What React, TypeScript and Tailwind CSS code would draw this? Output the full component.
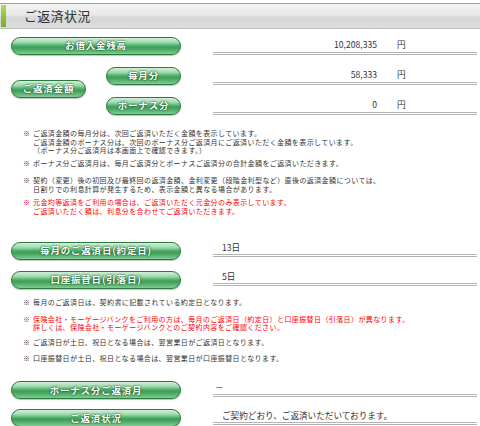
import type { ReactNode } from 'react'

const jp = "font-['Noto_Sans_CJK_JP',sans-serif]"

function Pill({ label, w }: { label: string; w: string }) {
  return (
    <div
      className={`${w} h-[18px] shrink-0 rounded-full border border-[#2b7a3e] bg-[linear-gradient(180deg,#d3f0da_0%,#9bdaab_28%,#48aa62_50%,#3f9e59_62%,#80cd93_100%)] shadow-[0_1px_1px_rgba(0,0,0,0.25)] flex items-center justify-center text-white font-bold text-[9.5px] tracking-[0.8px] leading-none [text-shadow:0_0_2px_#0d4a1c,0_0_1px_#0d4a1c] ${jp}`}
    >
      {label}
    </div>
  )
}

function Cell({ children, h, className = '' }: { children: ReactNode; h: string; className?: string }) {
  return (
    <div
      className={`ml-[32px] w-[264px] ${h} border-b-[3px] border-double border-[#b2b2b2] flex items-center text-[8.6px] text-[#333] ${jp} ${className}`}
    >
      {children}
    </div>
  )
}

function Note({ lines, red, className = '' }: { lines: string[]; red?: boolean; className?: string }) {
  return (
    <div
      className={`flex pl-[23px] text-[7px] leading-[8.6px] tracking-[0.4px] ${red ? 'text-[#ff0000]' : 'text-[#333]'} ${jp} ${className}`}
    >
      <span className="w-[10px] shrink-0">※</span>
      <div>
        {lines.map((l) => (
          <div key={l} className="whitespace-nowrap">{l}</div>
        ))}
      </div>
    </div>
  )
}

function Amount({ value }: { value: string }) {
  return (
    <>
      <span className="w-[164px] text-right">{value}</span>
      <span className="ml-[20px]">円</span>
    </>
  )
}

export default function App() {
  return (
    <div className="w-[480px] h-[426px] overflow-hidden bg-white pt-[3px]">
      {/* title bar */}
      <div className="h-[26px] flex items-center border-t border-[#9c9c9c] border-b border-b-[#bdbdbd] bg-[linear-gradient(180deg,#f3f3f3_0%,#e8e8e8_45%,#d7d7d7_55%,#dddddd_100%)]">
        <div className="ml-[1px] w-[5px] h-[22px] bg-[linear-gradient(180deg,#b4d85a_0%,#74ad2a_100%)]" />
        <div className={`ml-[18px] text-[13px] tracking-[0.3px] text-[#333] ${jp}`}>ご返済状況</div>
      </div>

      {/* amounts */}
      <div className="mt-[8px] flex flex-col gap-[12px]">
        <div className="flex items-start pl-[11px]">
          <Pill label="お借入金残高" w="w-[170px]" />
          <Cell h="h-[18px]">
            <Amount value="10,208,335" />
          </Cell>
        </div>
        <div className="flex items-start pl-[11px]">
          <div className="mt-[13px]">
            <Pill label="ご返済金額" w="w-[75px]" />
          </div>
          <div className="ml-[20px] flex flex-col gap-[12px]">
            <div className="flex items-start">
              <Pill label="毎月分" w="w-[75px]" />
              <Cell h="h-[18px]">
                <Amount value="58,333" />
              </Cell>
            </div>
            <div className="flex items-start">
              <Pill label="ボーナス分" w="w-[75px]" />
              <Cell h="h-[18px]">
                <Amount value="0" />
              </Cell>
            </div>
          </div>
        </div>
      </div>

      {/* notes 1 */}
      <div className="mt-[14px]">
        <Note
          lines={[
            'ご返済金額の毎月分は、次回ご返済いただく金額を表示しています。',
            'ご返済金額のボーナス分は、次回のボーナス分ご返済月にご返済いただく金額を表示しています。',
            '（ボーナス分ご返済月は本画面上で確認できます。）',
          ]}
        />
        <Note
          className="mt-[4.7px]"
          lines={['ボーナス分ご返済月は、毎月ご返済分とボーナスご返済分の合計金額をご返済いただきます。']}
        />
        <Note
          className="mt-[8.4px]"
          lines={[
            '契約（変更）後の初回及び最終回の返済金額、金利変更（段階金利型など）直後の返済金額については、',
            '日割りでの利息計算が発生するため、表示金額と異なる場合があります。',
          ]}
        />
        <Note
          red
          className="mt-[4.7px]"
          lines={[
            '元金均等返済をご利用の場合は、ご返済いただく元金分のみ表示しています。',
            'ご返済いただく額は、利息分を合わせてご返済いただきます。',
          ]}
        />
      </div>

      {/* dates */}
      <div className="mt-[26px] flex flex-col gap-[11px]">
        <div className="flex items-start pl-[11px]">
          <Pill label="毎月のご返済日(約定日)" w="w-[170px]" />
          <Cell h="h-[15px]" className="pl-[9px]">13日</Cell>
        </div>
        <div className="flex items-start pl-[11px]">
          <Pill label="口座振替日(引落日)" w="w-[170px]" />
          <Cell h="h-[15px]" className="pl-[9px]">5日</Cell>
        </div>
      </div>

      {/* notes 2 */}
      <div className="mt-[9px]">
        <Note lines={['毎月のご返済日は、契約書に記載されている約定日となります。']} />
        <Note
          red
          className="mt-[8.4px]"
          lines={[
            '保険会社・モーゲージバンクをご利用の方は、毎月のご返済日（約定日）と口座振替日（引落日）が異なります。',
            '詳しくは、保険会社・モーゲージバンクとのご契約内容をご確認ください。',
          ]}
        />
        <Note className="mt-[6.3px]" lines={['ご返済日が土日、祝日となる場合は、翌営業日がご返済日となります。']} />
        <Note className="mt-[7.4px]" lines={['口座振替日が土日、祝日となる場合は、翌営業日が口座振替日となります。']} />
      </div>

      {/* bonus / status */}
      <div className="mt-[18.7px] flex flex-col gap-[10px]">
        <div className="flex items-start pl-[11px]">
          <Pill label="ボーナス分ご返済月" w="w-[170px]" />
          <Cell h="h-[16px]" className="pl-[2px]">－</Cell>
        </div>
        <div className="flex items-start pl-[11px]">
          <Pill label="ご返済状況" w="w-[170px]" />
          <Cell h="h-[16px]" className="pl-[9px]">ご契約どおり、ご返済いただいております。</Cell>
        </div>
      </div>
    </div>
  )
}
